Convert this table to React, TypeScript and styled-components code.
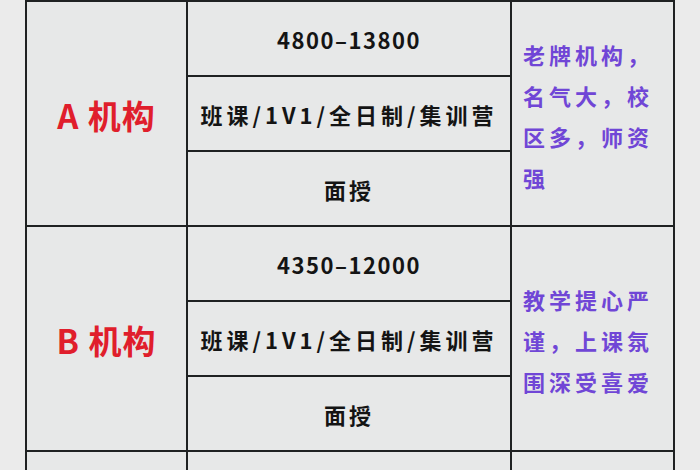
import { Fragment } from "react";
import styled, { createGlobalStyle } from "styled-components";

const GlobalStyle = createGlobalStyle`
  html, body {
    margin: 0;
    padding: 0;
    background: #ebebeb;
    overflow: hidden;
  }
  body {
    font-family: "Noto Sans CJK SC", "Liberation Sans", sans-serif;
  }
`;

const Page = styled.div`
  width: 700px;
  height: 470px;
  padding-left: 25px;
  box-sizing: border-box;
  overflow: hidden;
`;

const Table = styled.div`
  width: 650px;
  display: grid;
  grid-template-columns: 159px 322px 161px;
  grid-auto-rows: 73px;
  gap: 2px;
  padding: 2px;
  box-sizing: border-box;
  background: #1f2122;
`;

const Cell = styled.div<{ $span?: number }>`
  background: #e7e8e8;
  display: flex;
  align-items: center;
  justify-content: center;
  grid-row: ${(p) => (p.$span ? `span ${p.$span}` : "auto")};
`;

const OrgName = styled.div`
  color: #e01e2c;
  font-size: 33px;
  font-weight: 700;
  letter-spacing: 1px;
  margin-top: 2px;
`;

const Info = styled.div<{ $spacing: number }>`
  color: #141414;
  font-size: 22px;
  font-weight: 700;
  letter-spacing: ${(p) => p.$spacing}px;
`;

const Note = styled.div`
  color: #7046d6;
  font-size: 22px;
  font-weight: 700;
  letter-spacing: 4px;
  line-height: 41px;
  padding: 0 11px;
  width: 100%;
  box-sizing: border-box;
  margin-top: 4px;
`;

const blocks = [
  {
    name: "A 机构",
    price: "4800–13800",
    note: "老牌机构，名气大，校区多，师资强",
  },
  {
    name: "B 机构",
    price: "4350–12000",
    note: "教学提心严谨，上课氛围深受喜爱",
  },
  { name: "", price: "", note: "" },
];

const App = () => (
  <Page>
    <GlobalStyle />
    <Table>
      {blocks.map((b, i) => (
        <Fragment key={i}>
          <Cell $span={3}>
            <OrgName>{b.name}</OrgName>
          </Cell>
          <Cell>
            <Info $spacing={1.5}>{b.price}</Info>
          </Cell>
          <Cell $span={3}>
            <Note>{b.note}</Note>
          </Cell>
          <Cell>
            <Info $spacing={4}>{b.name ? "班课/1V1/全日制/集训营" : ""}</Info>
          </Cell>
          <Cell>
            <Info $spacing={3}>{b.name ? "面授" : ""}</Info>
          </Cell>
        </Fragment>
      ))}
    </Table>
  </Page>
);

export default App;
